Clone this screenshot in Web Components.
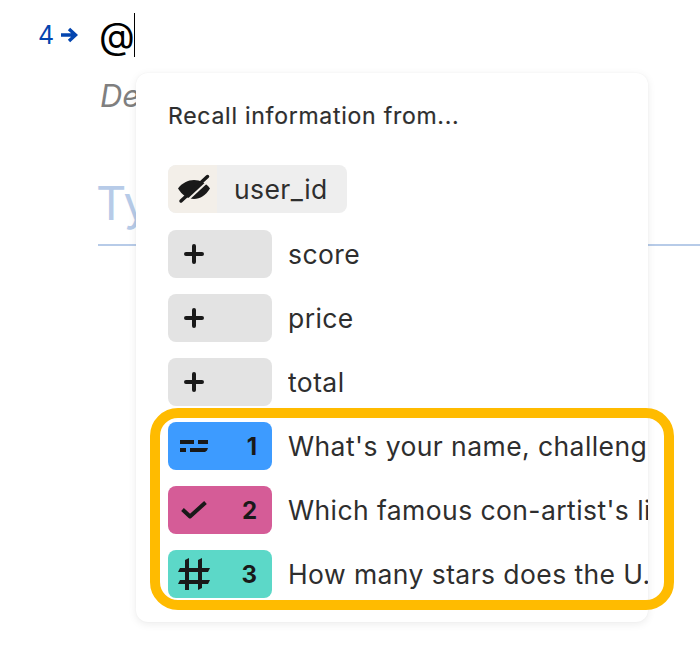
<!DOCTYPE html>
<html>
<head>
<meta charset="utf-8">
<title>Recall menu</title>
<style>
  html, body { margin: 0; background: #fff; }
  body { width: 700px; height: 650px; overflow: hidden; font-family: Inter, "Liberation Sans", sans-serif; }
</style>
</head>
<body>
<question-block number="4">
  <recall-menu title-text="Recall information from...">
    <recall-item kind="hidden" wide>user_id</recall-item>
    <recall-item kind="add">score</recall-item>
    <recall-item kind="add">price</recall-item>
    <recall-item kind="add">total</recall-item>
    <recall-item kind="short" number="1" color="#3d9bff">What's your name, challenger?</recall-item>
    <recall-item kind="check" number="2" color="#d55c97">Which famous con-artist's life story inspired the film?</recall-item>
    <recall-item kind="hash" number="3" color="#5cd8c8">How many stars does the U.S. flag have?</recall-item>
  </recall-menu>
</question-block>

<script>
const ICONS = {
  hidden: `<svg width="32" height="30" viewBox="0 0 32 30"><path fill="#191919" d="M0 14.500C4 9 10 6 16 6s12 3 16 8.500C28 21 22 25 16 25S4 21 0 14.500z"/><path stroke="#f3efe9" stroke-width="2" fill="none" d="M6.500 29 33.500 4"/><path stroke="#191919" stroke-width="3.500" stroke-linecap="round" fill="none" d="M3 27 29.500 2.500"/></svg>`,
  add: `<svg width="20" height="20" viewBox="0 0 20 20"><path stroke="#191919" stroke-width="4" stroke-linecap="round" fill="none" d="M10 2v16M2 10h16"/></svg>`,
  short: `<svg width="28" height="12" viewBox="0 0 28 12"><path fill="#191919" d="M0 0h14v4H0zM18 0h10v4H18zM0 8h6v4H0zM10 8h18l-1 2.500-2 1.500H10z"/></svg>`,
  check: `<svg width="26" height="18" viewBox="0 0 26 18"><path stroke="#191919" stroke-width="4" stroke-linejoin="round" fill="none" d="M1.500 8.500 9 15.500 24.500 1.500"/></svg>`,
  hash: `<svg width="32" height="32" viewBox="0 0 32 32"><path fill="#191919" d="M7 2 11 0v32H7zM20 2 24 0v30l-4 2zM2 10h30l-2 4H0zM2 22h30l-2 4H0z"/></svg>`
};

class QuestionBlock extends HTMLElement {
  constructor () {
    super();
    this.attachShadow({ mode: 'open' });
  }

  connectedCallback () {
    this.shadowRoot.innerHTML = `
      <style>
      :host {
        display: block;
        position: relative;
        height: 650px;
        color: #000;
      }
      .row {
        display: flex;
        align-items: flex-start;
        padding-top: 13px;
        padding-left: 38px;
      }
      .num {
        display: flex;
        align-items: center;
        gap: 6px;
        width: 62px;
        height: 44px;
        color: #0445af;
        font-size: 25px;
      }
      .body {
        flex: 1;
        min-width: 0;
      }
      .title {
        display: flex;
        align-items: center;
        height: 44px;
        margin-left: -1px;
        font-size: 37px;
      }
      .caret {
        width: 1px;
        height: 44px;
        margin-left: -1px;
        background: #000;
      }
      .desc {
        margin-top: 21px;
        font-size: 31px;
        line-height: 36px;
        font-style: italic;
        color: #7f7f7f;
      }
      .answer {
        margin-top: 59px;
        margin-left: -2px;
        height: 73px;
        font-size: 47px;
        line-height: 60px;
        text-indent: -2px;
        color: #b7cbe8;
        border-bottom: 2px solid #b7cbe8;
        box-sizing: border-box;
      }
      </style>
      <div class="row">
        <div class="num">
          <span>${this.getAttribute('number')}</span>
          <svg width="18" height="16" viewBox="0 0 18 16"><path stroke="#0445af" stroke-width="3.400" fill="none" d="M1 8h14M9 2l6.500 6L9 14"/></svg>
        </div>
        <div class="body">
          <div class="title"><span>@</span><span class="caret"></span></div>
          <div class="desc">Description (optional)</div>
          <div class="answer">Type your answer here</div>
        </div>
      </div>
      <slot></slot>
    `;
  }
}

class RecallMenu extends HTMLElement {
  constructor () {
    super();
    this.attachShadow({ mode: 'open' });
  }

  connectedCallback () {
    this.shadowRoot.innerHTML = `
      <style>
      :host {
        position: absolute;
        left: 136px;
        top: 73px;
        width: 512px;
        height: 549px;
        box-sizing: border-box;
        padding: 32px 0 0 32px;
        background: #fff;
        border-radius: 12px;
        box-shadow: 0 2px 8px rgba(0, 0, 0, 0.08), 0 0 2px rgba(0, 0, 0, 0.04);
      }
      .heading {
        height: 22px;
        line-height: 22px;
        margin-bottom: 38px;
        font-size: 23px;
        letter-spacing: 0.74px;
        color: #2e2e2e;
        -webkit-text-stroke: 0.2px #2e2e2e;
      }
      .list {
        display: flex;
        flex-direction: column;
        gap: 16px;
      }
      .ring {
        position: absolute;
        left: 14px;
        top: 335px;
        width: 524px;
        height: 202px;
        box-sizing: border-box;
        border: 10px solid #ffbb00;
        border-radius: 28px;
        pointer-events: none;
      }
      </style>
      <div class="heading">${this.getAttribute('title-text')}</div>
      <div class="list"><slot></slot></div>
      <div class="ring"></div>
    `;
  }
}

class RecallItem extends HTMLElement {
  constructor () {
    super();
    this.attachShadow({ mode: 'open' });
  }

  connectedCallback () {
    const kind = this.getAttribute('kind');
    const number = this.getAttribute('number') || '';
    const color = this.getAttribute('color') || '#e3e3e3';
    this.shadowRoot.innerHTML = `
      <style>
      :host {
        display: flex;
        align-items: center;
        gap: 16px;
        width: 480px;
        height: 48px;
        overflow: hidden;
        font-size: 26.5px;
        letter-spacing: 0.42px;
        color: #2e2e2e;
        white-space: nowrap;
      }
      :host([wide]) {
        gap: 0;
        margin-bottom: 1px;
        width: fit-content;
        padding-right: 19px;
        border-radius: 8px;
        background: #eee;
      }
      .tag {
        flex: none;
        display: flex;
        align-items: center;
        box-sizing: border-box;
        width: 104px;
        height: 48px;
        padding-right: 15px;
        border-radius: 8px;
        background: ${color};
        color: #191919;
        font-size: 24px;
        font-weight: 700;
        letter-spacing: 0;
      }
      .icon {
        flex: none;
        display: flex;
        align-items: center;
        justify-content: center;
        width: 52px;
      }
      .num {
        flex: 1;
        text-align: right;
      }
      :host([wide]) .tag {
        width: 49px;
        margin-right: 17px;
        padding: 0;
        border-radius: 8px 0 0 8px;
        background: #f3efe9;
      }
      .text {
        overflow: hidden;
      }
      </style>
      <span class="tag"><span class="icon">${ICONS[kind]}</span><span class="num">${number}</span></span>
      <span class="text"><slot></slot></span>
    `;
  }
}

customElements.define('question-block', QuestionBlock);
customElements.define('recall-menu', RecallMenu);
customElements.define('recall-item', RecallItem);
</script>
</body>
</html>
